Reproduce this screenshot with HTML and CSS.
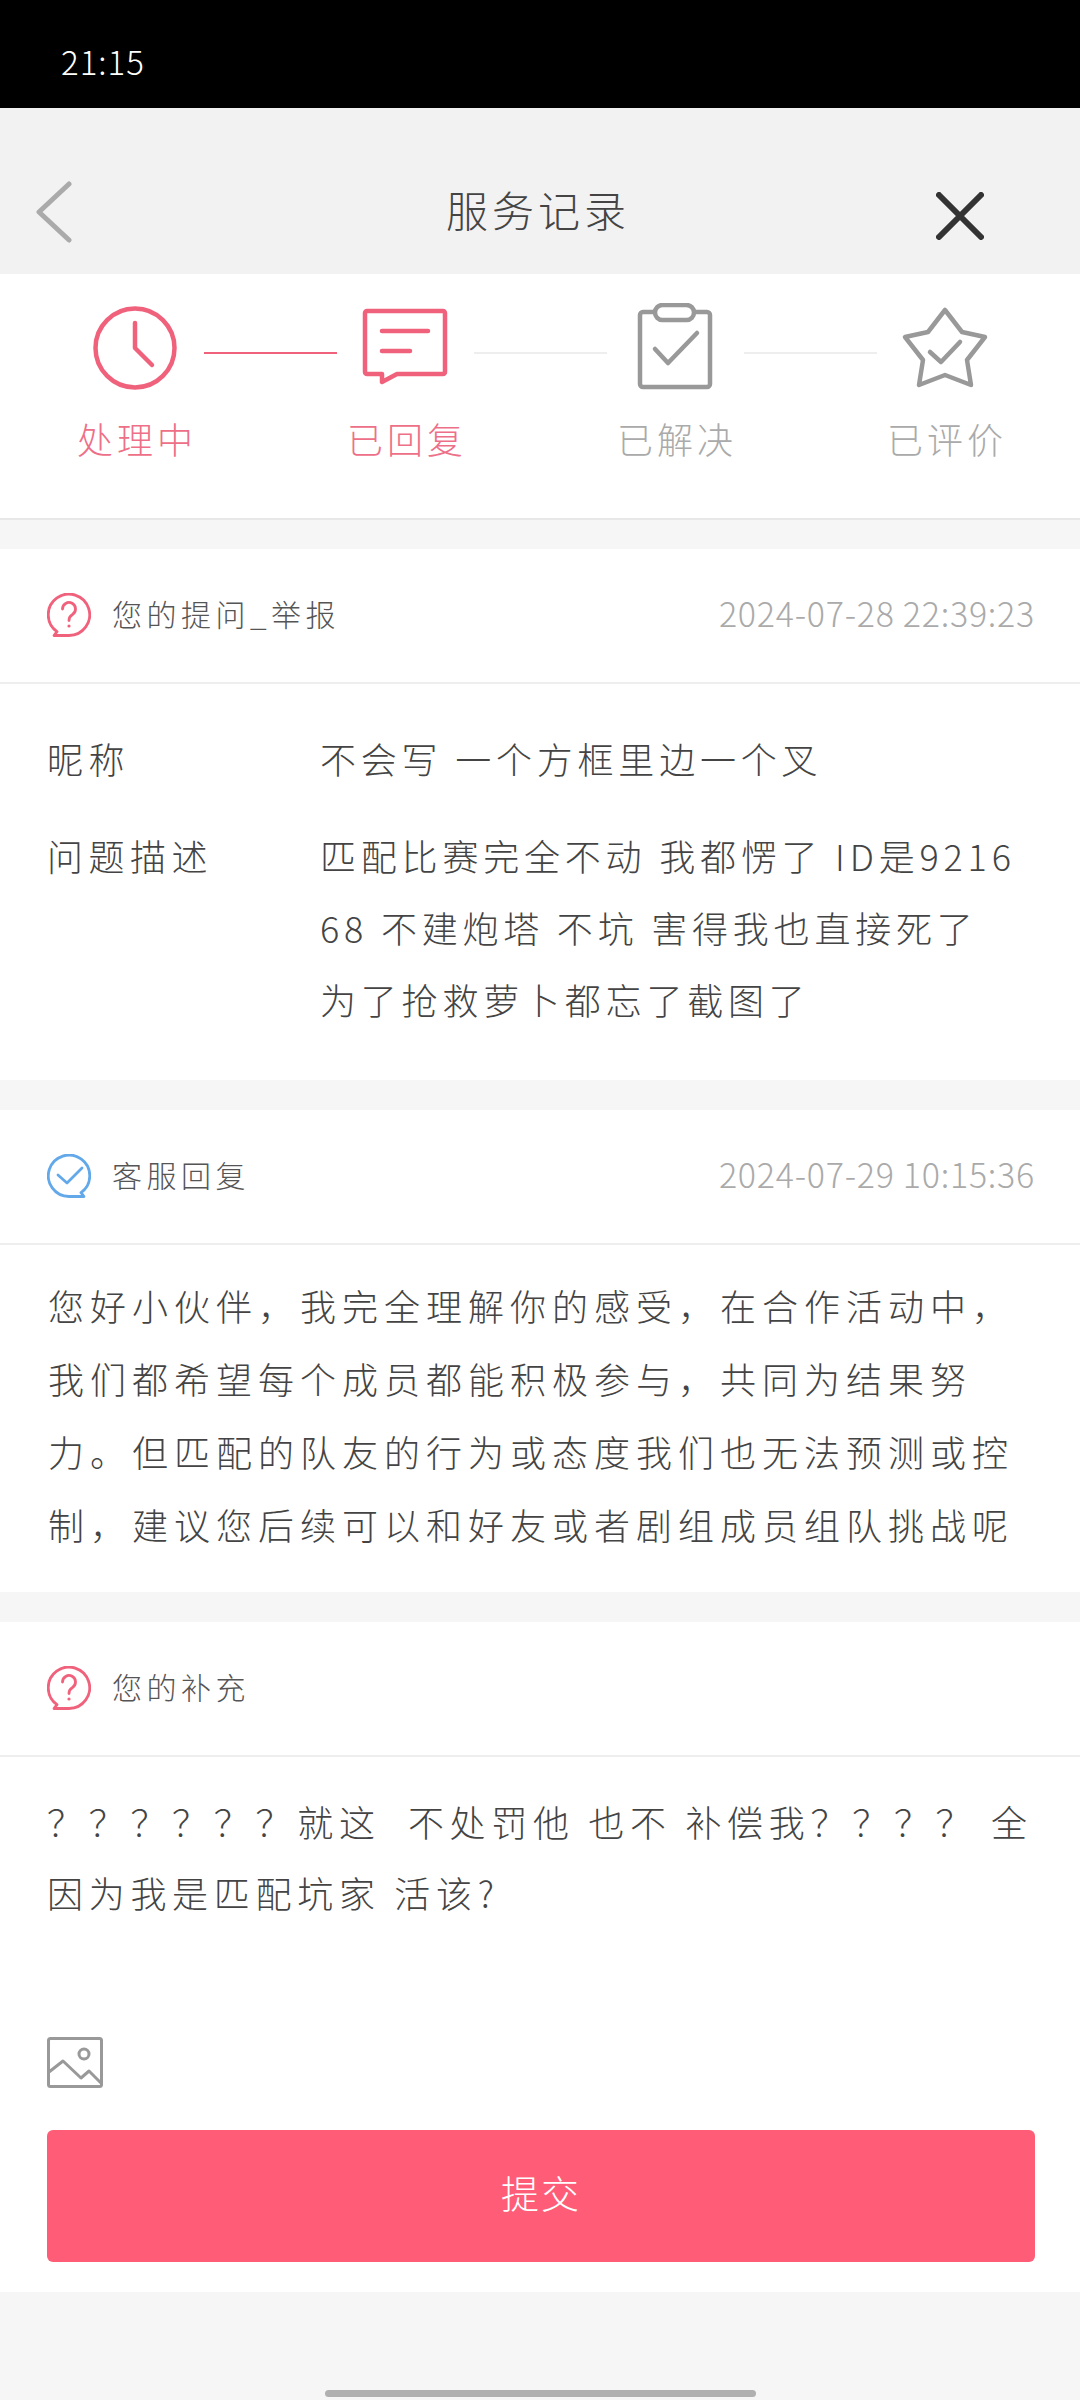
FILE: index.html
```html
<!DOCTYPE html>
<html lang="zh-CN">
<head>
    <meta charset="UTF-8">
    <meta name="viewport" content="width=device-width, initial-scale=1.0">
    <title>服务记录</title>
    <link rel="stylesheet" href="styles.css">
</head>
<body>
    <div class="statusbar">21:15</div>

    <header class="topbar">
        <svg class="back" width="36" height="62" viewBox="0 0 36 62"><path d="M33 3 L3 31 L33 59" /></svg>
        <div class="title">服务记录</div>
        <svg class="close" width="48" height="48" viewBox="0 0 48 48"><path d="M3 3 L45 45 M45 3 L3 45" /></svg>
    </header>

    <section class="steps">
        <div class="step-icons">
            <svg class="step-icon pink" viewBox="0 0 90 90">
                <circle cx="45" cy="45" r="39.5" />
                <path d="M45 20 V45 L62 62" />
            </svg>
            <div class="step-line on"></div>
            <svg class="step-icon pink" viewBox="0 0 90 90">
                <path d="M7 8 H83 a2 2 0 0 1 2 2 V69 a2 2 0 0 1 -2 2 H37 L22 79 V71 H7 a2 2 0 0 1 -2 -2 V10 a2 2 0 0 1 2 -2 Z" />
                <path d="M22 28 H68 M22 48 H50" />
            </svg>
            <div class="step-line"></div>
            <svg class="step-icon grey" viewBox="0 0 90 90">
                <rect x="10" y="9" width="70" height="75" rx="3" />
                <rect class="clip" x="25" y="2" width="39" height="15" rx="7.5" />
                <path d="M25 46 L38 60 L67 30" />
            </svg>
            <div class="step-line"></div>
            <svg class="step-icon grey" viewBox="0 0 90 90">
                <path d="M45 7 L62 29 L85 34 L67 57 L71 82 L45 72 L19 82 L23 57 L5 34 L28 29 Z" />
                <path d="M30 49 L41 59 L60 39" />
            </svg>
        </div>
        <div class="step-labels">
            <div class="on">处理中</div>
            <div class="on">已回复</div>
            <div>已解决</div>
            <div>已评价</div>
        </div>
    </section>

    <section class="card">
        <div class="card-head">
            <svg class="bubble pink" width="44" height="44" viewBox="0 0 44 44">
                <path d="M22 42.5 H7 L10 38.7 A20.7 20.7 0 1 1 22 42.5 Z" />
                <path d="M15.5 16 a6.5 6.5 0 1 1 10 5.5 c-2.5 1.5 -3.5 3 -3.5 6" />
                <circle class="dot" cx="22" cy="33" r="1.6" />
            </svg>
            <span class="head-title">您的提问_举报</span>
            <span class="head-time">2024-07-28 22:39:23</span>
        </div>
        <div class="info">
            <div class="info-row">
                <div class="info-label">昵称</div>
                <div class="info-value">不会写 一个方框里边一个叉</div>
            </div>
            <div class="info-row">
                <div class="info-label">问题描述</div>
                <div class="info-value">匹配比赛完全不动 我都愣了 ID是9216<br>68 不建炮塔 不坑 害得我也直接死了<br>为了抢救萝卜都忘了截图了</div>
            </div>
        </div>
    </section>

    <section class="card">
        <div class="card-head">
            <svg class="bubble blue" width="44" height="44" viewBox="0 0 44 44">
                <path d="M22 42.5 H37 L34 38.7 A20.7 20.7 0 1 0 22 42.5 Z" />
                <path d="M11 21 L20 29 L35 14" />
            </svg>
            <span class="head-title">客服回复</span>
            <span class="head-time">2024-07-29 10:15:36</span>
        </div>
        <p class="reply">您好小伙伴，我完全理解你的感受，在合作活动中，<br>我们都希望每个成员都能积极参与，共同为结果努<br>力。但匹配的队友的行为或态度我们也无法预测或控<br>制，建议您后续可以和好友或者剧组成员组队挑战呢</p>
    </section>

    <section class="card">
        <div class="card-head">
            <svg class="bubble pink" width="44" height="44" viewBox="0 0 44 44">
                <path d="M22 42.5 H7 L10 38.7 A20.7 20.7 0 1 1 22 42.5 Z" />
                <path d="M15.5 16 a6.5 6.5 0 1 1 10 5.5 c-2.5 1.5 -3.5 3 -3.5 6" />
                <circle class="dot" cx="22" cy="33" r="1.6" />
            </svg>
            <span class="head-title">您的补充</span>
        </div>
        <div class="extra">
            <p class="extra-text">？？？？？？就这&nbsp; 不处罚他 也不 补偿我？？？？ 全<br>因为我是匹配坑家 活该?</p>
            <svg class="pic" width="56" height="51" viewBox="0 0 56 51">
                <rect x="1.5" y="1.5" width="53" height="48" rx="2" />
                <circle cx="37" cy="17" r="5" />
                <path d="M2 35 L16 24 L34 41 L42 34 L55 47" />
            </svg>
            <button class="submit">提交</button>
        </div>
    </section>

    <footer class="bottom"><div class="home-bar"></div></footer>
</body>
</html>
```

FILE: styles.css
```css
* {
    box-sizing: border-box;
}
body {
    margin: 0;
    width: 1080px;
    height: 2400px;
    overflow: hidden;
    background-color: #f6f6f6;
    font-family: "Noto Sans CJK SC", "Noto Sans", sans-serif;
    font-weight: 300;
    color: #444;
}
svg {
    display: block;
    flex: none;
    fill: none;
    stroke-linecap: round;
    stroke-linejoin: round;
}

.statusbar {
    height: 108px;
    padding: 39px 0 0 61px;
    background-color: #000;
    color: #fff;
    font-size: 33px;
    letter-spacing: 1px;
    line-height: 44px;
}

.topbar {
    display: flex;
    align-items: center;
    height: 166px;
    padding: 42px 96px 0 36px;
    background-color: #f2f2f2;
}
.back path {
    stroke: #aaa;
    stroke-width: 5;
}
.title {
    flex: 1;
    padding: 0 0 8px 68px;
    text-align: center;
    font-size: 42px;
    letter-spacing: 4px;
    color: #444;
}
.close {
    margin-top: 8px;
}
.close path {
    stroke: #333;
    stroke-width: 6;
}

.steps {
    padding: 29px 0 52px;
    background-color: #fff;
    border-bottom: 2px solid #e8e8e8;
}
.step-icons {
    display: flex;
    align-items: center;
    padding: 0 90px;
}
.step-icon {
    width: 90px;
    height: 90px;
    stroke-width: 4.5;
}
.step-icon.pink {
    stroke: #f0617c;
}
.step-icon.grey {
    stroke: #999;
}
.step-icon .clip {
    fill: #fff;
}
.step-line {
    width: 133px;
    height: 2px;
    margin: 9px 23px 0 24px;
    background-color: #eee;
}
.step-line.on {
    background-color: #f0617c;
}
.step-labels {
    display: grid;
    grid-template-columns: repeat(4, 1fr);
    margin-top: 20px;
    padding-bottom: 3px;
    text-align: center;
    font-size: 36px;
    letter-spacing: 4px;
    line-height: 50px;
    color: #aaa;
}
.step-labels div {
    padding-left: 4px;
}
.step-labels .on {
    color: #ee6f88;
}

.card {
    margin-top: 29px;
    background-color: #fff;
}
.card + .card {
    margin-top: 30px;
}
.card-head {
    display: flex;
    align-items: center;
    height: 135px;
    padding: 0 45px 2px 47px;
    border-bottom: 2px solid #eee;
}
.bubble {
    margin-right: 21px;
    stroke-width: 2.8;
}
.bubble.pink {
    stroke: #f0617c;
}
.bubble.blue {
    stroke: #63a9ea;
}
.bubble .dot {
    fill: #f0617c;
    stroke: none;
}
.head-title {
    padding-bottom: 4px;
    font-size: 30px;
    letter-spacing: 4.5px;
    color: #555;
}
.head-time {
    margin-left: auto;
    padding-bottom: 4px;
    font-size: 34px;
    letter-spacing: 0.75px;
    color: #aaa;
}

.info {
    padding: 38px 48px 45px 47px;
    font-size: 36px;
    line-height: 72px;
}
.info-row {
    display: flex;
}
.info-row + .info-row {
    margin-top: 25px;
}
.info-label {
    width: 273px;
    flex: none;
    letter-spacing: 5.5px;
}
.info-value {
    letter-spacing: 4.8px;
    white-space: nowrap;
}

.reply {
    margin: 0;
    padding: 24px 48px 31px;
    font-size: 36px;
    letter-spacing: 6px;
    line-height: 73px;
    white-space: nowrap;
}

.extra {
    padding: 29px 45px 30px 47px;
}
.extra-text {
    margin: 0;
    font-size: 36px;
    letter-spacing: 5.7px;
    line-height: 71px;
    white-space: nowrap;
}
.pic {
    margin-top: 109px;
    stroke: #999;
    stroke-width: 3;
}
.submit {
    display: block;
    width: 100%;
    height: 132px;
    margin-top: 42px;
    padding: 0 0 9px;
    border: none;
    border-radius: 6px;
    background-color: #ff5d77;
    color: #fff;
    font-family: inherit;
    font-weight: 300;
    font-size: 38px;
    letter-spacing: 2px;
}

.bottom {
    display: flex;
    justify-content: center;
    align-items: flex-end;
    height: 108px;
    padding-bottom: 3px;
}
.home-bar {
    width: 431px;
    height: 7px;
    border-radius: 4px;
    background-color: #b0b0b0;
}
```
